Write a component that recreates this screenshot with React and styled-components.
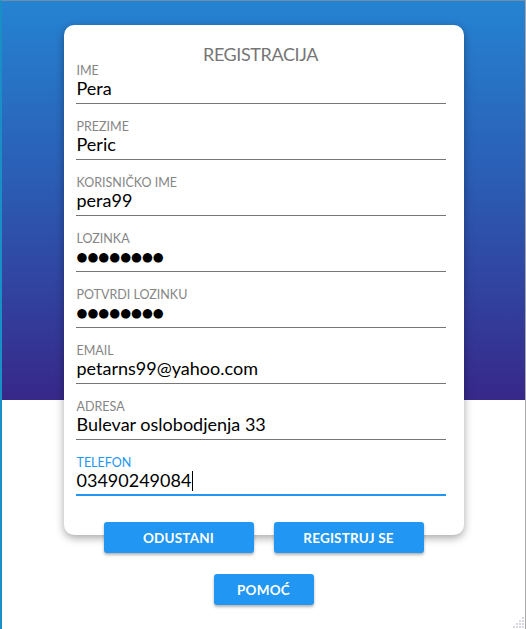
import React from "react";
import styled, { createGlobalStyle } from "styled-components";

const Global = createGlobalStyle`
  html, body { margin: 0; padding: 0; background: #fff; }
  body { font-family: Lato, "Noto Sans", sans-serif; }
  * { box-sizing: border-box; }
`;

const Page = styled.div`
  position: relative;
  width: 526px;
  height: 629px;
  overflow: hidden;
  border-top: 1px solid #6f8eae;
  border-left: 2px solid #1a8fc6;
  border-right: 1px solid #a9a9a9;
  background: linear-gradient(180deg, #2583d2 0%, #2b5db4 45%, #37288a 100%) 0 0 / 100% 399px no-repeat,
    #ffffff;
  padding-top: 24px;
  display: flex;
  flex-direction: column;
  align-items: center;
`;

const Card = styled.div`
  width: 400px;
  background: #fff;
  border-radius: 10px;
  box-shadow: 0 3px 8px rgba(0, 0, 0, 0.35);
  padding: 18px 18px 39px 12px;
  display: flex;
  flex-direction: column;
  gap: 17px;
`;

const Title = styled.h1`
  margin: 0 0 -17px;
  font-size: 18px;
  letter-spacing: -0.4px;
  line-height: 22px;
  font-weight: 400;
  color: #767676;
  text-align: center;
`;

const Field = styled.div`
  width: 370px;
  display: flex;
  flex-direction: column;
  padding-bottom: ${(p) => (p.$focused ? "2px" : "3px")};
  border-bottom: ${(p) => (p.$focused ? "2px solid #2196f3" : "1px solid #767676")};
`;

const Label = styled.div`
  font-size: 12.5px;
  line-height: 12px;
  color: ${(p) => (p.$focused ? "#2196f3" : "#858585")};
  padding-left: 1px;
`;

const Value = styled.div`
  font-size: 18px;
  line-height: 23px;
  height: 23px;
  color: #000;
  padding-left: 1px;
  display: flex;
  align-items: center;
  white-space: nowrap;
`;

const Dots = styled.span`
  font-family: "DejaVu Sans", sans-serif;
  font-size: 12.5px;
  letter-spacing: 0;
  line-height: 23px;
`;

const Caret = styled.span`
  display: inline-block;
  width: 1px;
  height: 20px;
  background: #000;
  margin-left: 1px;
`;

const Row = styled.div`
  display: flex;
  justify-content: center;
  gap: 20px;
  margin-top: ${(p) => p.$mt};
`;

const Button = styled.button`
  width: ${(p) => p.$w}px;
  height: 31px;
  border: none;
  border-radius: 3px;
  background: #2196f3;
  color: #fff;
  font-family: Lato, "Noto Sans", sans-serif;
  font-weight: 700;
  font-size: 13.5px;
  letter-spacing: 0.2px;
  box-shadow: 0 2px 3px rgba(0, 0, 0, 0.3);
  cursor: pointer;
  padding: 0;
`;

const Grip = styled.svg`
  position: absolute;
  right: 1px;
  bottom: 1px;
`;

const fields = [
  { label: "IME", value: "Pera" },
  { label: "PREZIME", value: "Peric" },
  { label: "KORISNIČKO IME", value: "pera99" },
  { label: "LOZINKA", dots: true },
  { label: "POTVRDI LOZINKU", dots: true },
  { label: "EMAIL", value: "petarns99@yahoo.com" },
  { label: "ADRESA", value: "Bulevar oslobodjenja 33" },
  { label: "TELEFON", value: "03490249084", focused: true },
];

export default function App() {
  return (
    <>
      <Global />
      <Page>
        <Card>
          <Title>REGISTRACIJA</Title>
          {fields.map((f) => (
            <Field key={f.label} $focused={f.focused}>
              <Label $focused={f.focused}>{f.label}</Label>
              <Value>
                {f.dots ? <Dots>●●●●●●●●</Dots> : f.value}
                {f.focused && <Caret />}
              </Value>
            </Field>
          ))}
        </Card>
        <Row $mt="-13px">
          <Button $w={150}>ODUSTANI</Button>
          <Button $w={150}>REGISTRUJ SE</Button>
        </Row>
        <Row $mt="21px">
          <Button $w={100}>POMOĆ</Button>
        </Row>
        <Grip width="11" height="11" viewBox="0 0 11 11">
          {[
            [9, 1], [9, 4], [9, 7], [6, 4], [6, 7], [3, 7], [9, 10], [6, 10], [3, 10], [0, 10],
          ].map(([x, y], i) => (
            <rect key={i} x={x} y={y - 1} width="2" height="2" fill="#d8d8e4" />
          ))}
        </Grip>
      </Page>
    </>
  );
}
